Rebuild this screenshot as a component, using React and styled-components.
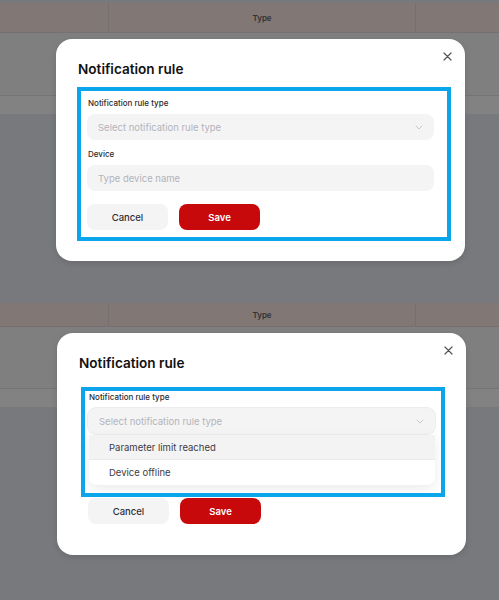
import React from "react";
import styled, { createGlobalStyle } from "styled-components";

const GlobalStyle = createGlobalStyle`
  * { box-sizing: border-box; }
  body {
    margin: 0;
    background: #78797d;
    font-family: Inter, "Noto Sans", sans-serif;
  }
`;

const Page = styled.div`
  width: 499px;
  display: flex;
  flex-direction: column;
`;

const Shot = styled.section`
  display: grid;
  height: ${(p) => p.$height}px;
  overflow: hidden;
  & > * {
    grid-area: 1 / 1;
  }
`;

const Backdrop = styled.div`
  display: flex;
  flex-direction: column;
  background: #78797d;
`;

const Strip = styled.div`
  height: ${(p) => p.$h}px;
  flex-shrink: 0;
`;

const HeaderRow = styled.div`
  display: grid;
  grid-template-columns: 108px 307px 1fr;
  height: ${(p) => p.$h}px;
  background: #817876;
  border-bottom: 1px solid #777072;
`;

const HeaderCell = styled.div`
  display: flex;
  align-items: center;
  justify-content: center;
  font-size: 8px;
  font-weight: 600;
  color: #333132;
  border-left: ${(p) => (p.$first ? "none" : "1px solid #767170")};
`;

const BodyRow = styled.div`
  height: ${(p) => p.$h}px;
  background: ${(p) => p.$bg};
  border-bottom: ${(p) => (p.$line ? "1px solid #747476" : "none")};
`;

const Modal = styled.div`
  position: relative;
  align-self: start;
  margin: ${(p) => p.$top}px 0 0 ${(p) => p.$left}px;
  width: 409px;
  height: 222px;
  background: #fff;
  border-radius: 16px;
  box-shadow: 0 2px 6px rgba(0, 0, 0, 0.12);
  padding: 21px 31px 0;
  display: flex;
  flex-direction: column;
`;

const CloseButton = styled.button`
  position: absolute;
  top: 11px;
  right: 12px;
  width: 12px;
  height: 12px;
  padding: 0;
  border: none;
  background: none;
  display: flex;
  align-items: center;
  justify-content: center;
`;

const Title = styled.h2`
  margin: 0 0 0 -9px;
  font-size: 13.6px;
  font-weight: 600;
  color: #111;
  line-height: 18px;
`;

const Form = styled.div`
  display: flex;
  flex-direction: column;
  margin-top: 21px;
`;

const Field = styled.div`
  display: flex;
  flex-direction: column;
  gap: 6px;
  margin-bottom: 10px;
  position: relative;
  visibility: ${(p) => (p.$hidden ? "hidden" : "visible")};
`;

const Label = styled.label`
  font-size: 8px;
  font-weight: 500;
  color: #2b2b30;
  line-height: 9px;
  padding-left: 1px;
`;

const Control = styled.div`
  height: 26px;
  border-radius: 8px;
  background: #f4f4f5;
  display: flex;
  align-items: center;
  justify-content: space-between;
  padding: 0 11px;
  font-size: 9.5px;
  color: #b3b3bb;
  box-shadow: ${(p) => (p.$open ? "0 0 0 1px #ececef" : "none")};
`;

const Dropdown = styled.ul`
  position: absolute;
  top: 100%;
  left: 1px;
  right: 0;
  margin: 1px 0 0;
  padding: 0;
  list-style: none;
  background: #fff;
  border-radius: 0 0 8px 8px;
  box-shadow: 0 4px 12px rgba(0, 0, 0, 0.08);
  overflow: hidden;
  z-index: 2;
`;

const Option = styled.li`
  height: 25px;
  display: flex;
  align-items: center;
  padding-left: 20px;
  font-size: 9.5px;
  color: #3c3c44;
  background: ${(p) => (p.$active ? "#f3f3f4" : "#fff")};
  border-bottom: ${(p) => (p.$active ? "1px solid #ebebee" : "none")};
`;

const Actions = styled.div`
  display: flex;
  gap: 11px;
  margin-top: 3px;
`;

const Button = styled.button`
  width: 81px;
  height: 26px;
  border: none;
  border-radius: 8px;
  font-family: inherit;
  font-size: 9.5px;
  font-weight: ${(p) => (p.$primary ? 600 : 500)};
  background: ${(p) => (p.$primary ? "#c8090b" : "#f4f4f5")};
  color: ${(p) => (p.$primary ? "#fff" : "#2f2f35")};
`;

const Highlight = styled.div`
  position: absolute;
  left: ${(p) => p.$left}px;
  top: ${(p) => p.$top}px;
  width: ${(p) => p.$width}px;
  height: ${(p) => p.$height}px;
  border: 4px solid #0aa5ea;
  pointer-events: none;
  z-index: 3;
`;

const Chevron = () => (
  <svg width="8" height="5" viewBox="0 0 8 5" fill="none">
    <path d="M1 1l3 3 3-3" stroke="#c2c2c8" strokeWidth="0.9" strokeLinecap="round" strokeLinejoin="round" />
  </svg>
);

const CloseIcon = () => (
  <svg width="9" height="9" viewBox="0 0 9 9" fill="none">
    <path d="M1 1l7 7M8 1L1 8" stroke="#555" strokeWidth="1.2" strokeLinecap="round" />
  </svg>
);

const TableBackdrop = ({ top, header, body }) => (
  <Backdrop>
    <Strip $h={top} />
    <HeaderRow $h={header}>
      <HeaderCell $first />
      <HeaderCell>Type</HeaderCell>
      <HeaderCell />
    </HeaderRow>
    <BodyRow $h={body} $bg="#7f7f80" $line />
    <BodyRow $h={18} $bg="#828283" />
  </Backdrop>
);

const RuleModal = ({ top, left, open, box }) => (
  <Modal $top={top} $left={left}>
    <CloseButton aria-label="Close">
      <CloseIcon />
    </CloseButton>
    <Title>Notification rule</Title>
    <Form>
      <Field>
        <Label>Notification rule type</Label>
        <Control $open={open}>
          <span>Select notification rule type</span>
          <Chevron />
        </Control>
        {open && (
          <Dropdown>
            <Option $active>Parameter limit reached</Option>
            <Option>Device offline</Option>
          </Dropdown>
        )}
      </Field>
      <Field $hidden={open}>
        <Label>Device</Label>
        <Control>
          <span>Type device name</span>
        </Control>
      </Field>
      <Actions>
        <Button>Cancel</Button>
        <Button $primary>Save</Button>
      </Actions>
    </Form>
    <Highlight $left={box.left} $top={box.top} $width={box.width} $height={box.height} />
  </Modal>
);

export default function App() {
  return (
    <>
      <GlobalStyle />
      <Page>
        <Shot $height={297}>
          <TableBackdrop top={3} header={30} body={63} />
          <RuleModal top={39} left={56} box={{ left: 21, top: 48, width: 374, height: 154 }} />
        </Shot>
        <Shot $height={303}>
          <TableBackdrop top={6} header={24} body={62} />
          <RuleModal top={36} left={57} open box={{ left: 24, top: 54, width: 364, height: 110 }} />
        </Shot>
      </Page>
    </>
  );
}
